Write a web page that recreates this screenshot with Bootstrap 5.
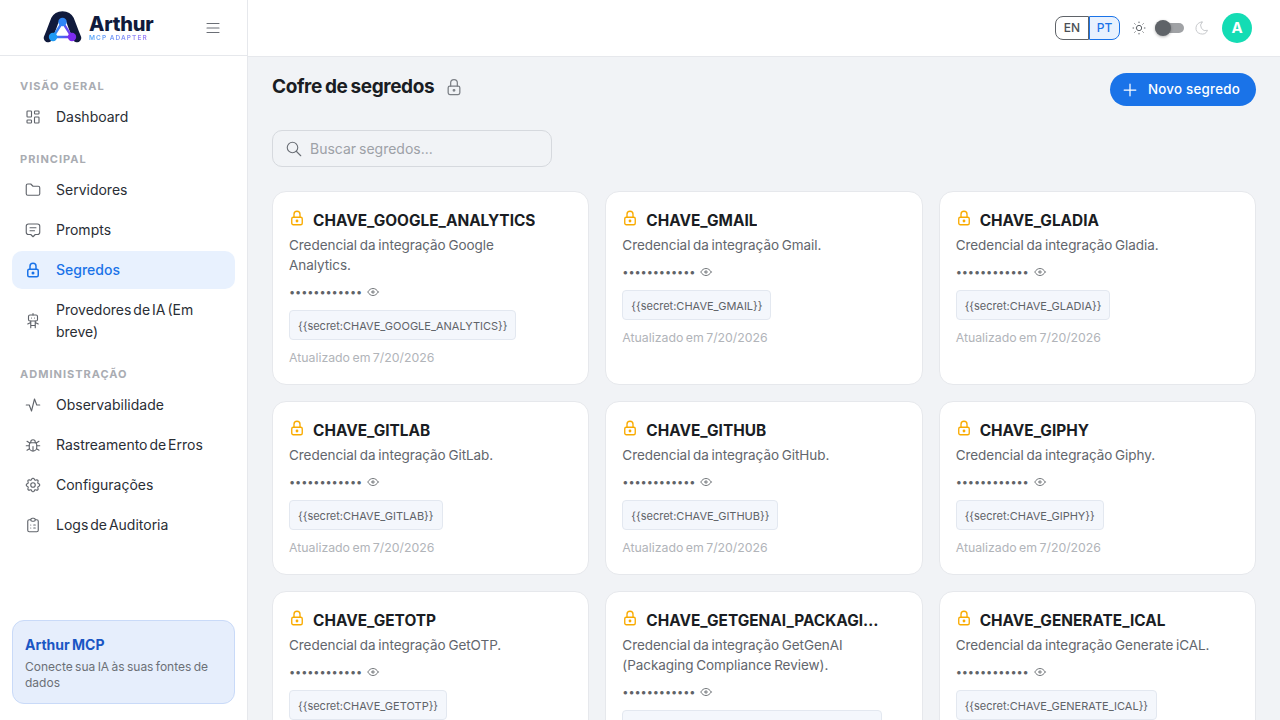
<!DOCTYPE html>
<html lang="pt">
<head>
  <meta charset="UTF-8" />
  <meta name="viewport" content="width=device-width, initial-scale=1.0"/>
  <title>Cofre de segredos | Arthur MCP</title>
  <link href="https://cdn.jsdelivr.net/npm/bootstrap@5.3.3/dist/css/bootstrap.min.css" rel="stylesheet" />
  <style>
    html, body { height: 100%; overflow: hidden; }
    body { font-family: "Inter", "Liberation Sans", sans-serif; background: #f1f3f6; color: #1f2329; word-spacing: -1px; }
    svg.ic { fill: none; stroke: currentColor; stroke-width: 1.5; stroke-linecap: round; stroke-linejoin: round; flex-shrink: 0; }
    svg.ic-b { stroke-width: 2; }

    .sidebar { width: 248px; flex-shrink: 0; background: #fff; border-right: 1px solid #e6e8ec; height: 720px; }
    .brand { height: 56px; border-bottom: 1px solid #e6e8ec; padding-left: 43px; padding-right: 25px; }
    .brand-name { font-size: 20px; font-weight: 800; line-height: 20px; color: #101a3c; letter-spacing: -.2px; }
    .brand-sub { width: fit-content; font-size: 6.500px; font-weight: 600; line-height: 8px; letter-spacing: 1.050px; word-spacing: 0; color: #7a8cf6; background: linear-gradient(90deg, #4fa6f8, #a07cf5); -webkit-background-clip: text; background-clip: text; -webkit-text-fill-color: transparent; }
    .menu-btn { color: #6b6f76; }
    .side-nav { padding: 22px 12px 0; }
    .nav-head { font-size: 11px; font-weight: 700; letter-spacing: 1px; word-spacing: 0; color: #a9acb2; padding: 0 8px; line-height: 16px; margin-bottom: 4px; }
    .side-link + .nav-head { margin-top: 15px; }
    .side-link { display: flex; align-items: center; gap: 14px; padding: 8px 12px; margin-bottom: 2px; min-height: 38px; border-radius: 10px; font-size: 14px; line-height: 22px; word-spacing: -2px; color: #2a2e35; text-decoration: none; }
    .side-link svg { color: #60646b; }
    .side-link.active { background: #e8f1fe; color: #1a73e8; font-weight: 500; }
    .side-link.active svg { color: #1a73e8; }
    .side-promo { background: #e6eefc; border: 1px solid #c9daf8; border-radius: 12px; padding: 14px 12px 12px; margin: 0 12px 16px; }
    .side-promo strong { display: block; font-size: 14px; line-height: 20px; color: #1a56c4; font-weight: 700; }
    .side-promo span { display: block; font-size: 12px; line-height: 16px; color: #6c7077; margin-top: 4px; }

    .main-col { min-width: 0; }
    .topbar { height: 57px; background: #fff; border-bottom: 1px solid #e6e8ec; padding-right: 28px; }
    .lang { margin-right: 11px; }
    .lang span { display: block; height: 24px; font-size: 12px; font-weight: 500; line-height: 22px; text-align: center; }
    .lang span:first-child { width: 34px; border: 1px solid #5f6368; border-radius: 8px 0 0 8px; color: #4b4f55; background: #fff; }
    .lang span:last-child { width: 31px; border: 1px solid #1a73e8; border-radius: 0 8px 8px 0; background: #e8f1fe; color: #1a73e8; }
    .toggle-track { width: 29px; height: 10px; margin: 0 10px 0 8px; background: #a0a2a5; border-radius: 5px; position: relative; }
    .toggle-thumb { position: absolute; left: 0; top: -3px; width: 16px; height: 16px; border-radius: 50%; background: #5f6368; box-shadow: 0 1px 3px rgba(0,0,0,.3); }
    .avatar { width: 30px; height: 30px; margin-left: 12px; border-radius: 50%; background: #14dcb4; color: #fff; font-size: 15px; font-weight: 700; line-height: 30px; text-align: center; }

    .page { padding: 16px 24px 0; }
    .page-head { gap: 10px; }
    .page-title { font-size: 19px; font-weight: 700; line-height: 28px; letter-spacing: -.4px; color: #1a1d23; margin: 0; }
    .btn-new { height: 33px; width: 146px; background: #1a73e8; color: #fff; border: 0; border-radius: 17px; font-size: 13.300px; font-weight: 500; letter-spacing: .25px; padding: 0 0 0 10px; gap: 8px; }
    .btn-new:hover { background: #1a73e8; color: #fff; }
    .search { width: 280px; height: 37px; border: 1px solid #d6d9de; border-radius: 10px; padding: 0 12px; margin: 24px 0; color: #6b6f76; gap: 7px; }
    .search input { border: 0; background: transparent; outline: 0; width: 100%; font-size: 14px; padding: 0; word-spacing: -1px; }
    .search input::placeholder { color: #9da1a7; opacity: 1; }

    .secret-grid { display: grid; grid-template-columns: repeat(3, minmax(0, 1fr)); gap: 16px; }
    .secret-card { background: #fff; border: 1px solid #e6e8ec; border-radius: 14px; padding: 17px 16px 16.750px; }
    .secret-top { gap: 7px; }
    .secret-lock { color: #f9ab00; margin: 0 0 0 -1px; }
    svg.secret-lock { stroke-width: 1.800; }
    .secret-name { font-size: 15.400px; font-weight: 700; line-height: 24px; color: #1a1d23; margin: 0 24px 0 0; overflow: hidden; white-space: nowrap; text-overflow: ellipsis; }
    .secret-desc { font-size: 13.500px; line-height: 20px; letter-spacing: -.05px; color: #62666d; margin: 2px 22px 0 0; }
    .secret-dots { font-size: 11px; line-height: 18px; letter-spacing: -.1px; word-spacing: 0; color: #5f6368; margin-top: 8px; height: 18px; }
    .secret-dots svg { color: #5f6368; margin-left: 4px; }
    .secret-ref { display: block; width: fit-content; max-width: 260px; overflow: hidden; text-overflow: ellipsis; font-family: "Inter", "Liberation Sans", sans-serif; font-size: 11px; line-height: 31px; height: 30px; padding: 0 8px; background: #f4f7fc; border: 1px solid #e3e8f0; border-radius: 4px; color: #5f6368; margin-top: 9px; white-space: nowrap; word-spacing: 0; }
    .secret-date { font-size: 12.300px; line-height: 18px; color: #b1b4b9; margin-top: 9px; }
  </style>
</head>
<body>

  <svg width="0" height="0" class="position-absolute">
    <symbol id="i-lock" viewBox="0 0 24 24"><path d="M5 13a2 2 0 0 1 2-2h10a2 2 0 0 1 2 2v6a2 2 0 0 1-2 2H7a2 2 0 0 1-2-2z"/><path d="M11 16a1 1 0 1 0 2 0a1 1 0 0 0-2 0"/><path d="M8 11V7a4 4 0 1 1 8 0v4"/></symbol>
    <symbol id="i-eye" viewBox="0 0 24 24"><path d="M10 12a2 2 0 1 0 4 0a2 2 0 0 0-4 0"/><path d="M21 12c-2.400 4-5.400 6-9 6s-6.600-2-9-6c2.400-4 5.400-6 9-6s6.600 2 9 6"/></symbol>
  </svg>

  <div class="d-flex">
    <!-- Sidebar -->
    <aside class="sidebar d-flex flex-column">
      <div class="brand d-flex align-items-center justify-content-between">
        <div class="d-flex align-items-center" style="gap:7px">
          <svg width="39" height="33" viewBox="0 0 39 33">
            <defs>
              <linearGradient id="tri" x1="0" y1="0" x2="1" y2="0"><stop offset="0" stop-color="#1e9bf5"/><stop offset="1" stop-color="#7c2cf0"/></linearGradient>
            </defs>
            <path d="M5 27C8 20 10 14 12 9c2-4 4.500-4.500 7.500-4.500S25 5 27 9c2 5 4 11 7 18" fill="none" stroke="#101a3c" stroke-width="8.500" stroke-linecap="round"/>
            <path d="M19.500 11 10 26h19z" fill="#fff" stroke="url(#tri)" stroke-width="2.400"/>
            <circle cx="19.500" cy="11" r="4.200" fill="#2f86f6"/>
            <circle cx="10" cy="26" r="4.200" fill="#1e9bf5"/>
            <circle cx="29" cy="26" r="4.200" fill="#7c2cf0"/>
          </svg>
          <div>
            <div class="brand-name">Arthur</div>
            <div class="brand-sub">MCP ADAPTER</div>
          </div>
        </div>
        <svg class="ic menu-btn" width="18" height="18" viewBox="0 0 24 24"><path d="M4 6h16M4 12h16M4 18h16"/></svg>
      </div>

      <nav class="side-nav flex-grow-1">
        <div class="nav-head">VISÃO GERAL</div>
        <a class="side-link" href="#">
          <svg class="ic" width="18" height="18" viewBox="0 0 24 24"><path d="M5 4h4a1 1 0 0 1 1 1v6a1 1 0 0 1-1 1H5a1 1 0 0 1-1-1V5a1 1 0 0 1 1-1"/><path d="M5 16h4a1 1 0 0 1 1 1v2a1 1 0 0 1-1 1H5a1 1 0 0 1-1-1v-2a1 1 0 0 1 1-1"/><path d="M15 12h4a1 1 0 0 1 1 1v6a1 1 0 0 1-1 1h-4a1 1 0 0 1-1-1v-6a1 1 0 0 1 1-1"/><path d="M15 4h4a1 1 0 0 1 1 1v2a1 1 0 0 1-1 1h-4a1 1 0 0 1-1-1V5a1 1 0 0 1 1-1"/></svg>
          Dashboard</a>

        <div class="nav-head">PRINCIPAL</div>
        <a class="side-link" href="#">
          <svg class="ic" width="18" height="18" viewBox="0 0 24 24"><path d="M5 4h4l3 3h7a2 2 0 0 1 2 2v8a2 2 0 0 1-2 2H5a2 2 0 0 1-2-2V6a2 2 0 0 1 2-2"/></svg>
          Servidores</a>
        <a class="side-link" href="#">
          <svg class="ic" width="18" height="18" viewBox="0 0 24 24"><path d="M8 9h8M8 13h6"/><path d="M9 18H6a3 3 0 0 1-3-3V7a3 3 0 0 1 3-3h12a3 3 0 0 1 3 3v8a3 3 0 0 1-3 3h-3l-3 3z"/></svg>
          Prompts</a>
        <a class="side-link active" href="#">
          <svg class="ic ic-b" width="18" height="18"><use href="#i-lock"/></svg>
          Segredos</a>
        <a class="side-link" href="#">
          <svg class="ic" width="18" height="18" viewBox="0 0 24 24"><path d="M6 6a2 2 0 0 1 2-2h8a2 2 0 0 1 2 2v4a2 2 0 0 1-2 2H8a2 2 0 0 1-2-2z"/><path d="M12 2v2M9 12v9M15 12v9M5 16l4-2M15 14l4 2M9 18h6M10 8v.01M14 8v.01"/></svg>
          Provedores de IA (Em breve)</a>

        <div class="nav-head">ADMINISTRAÇÃO</div>
        <a class="side-link" href="#">
          <svg class="ic" width="18" height="18" viewBox="0 0 24 24"><path d="M3 12h4l3 8 4-16 3 8h4"/></svg>
          Observabilidade</a>
        <a class="side-link" href="#">
          <svg class="ic" width="18" height="18" viewBox="0 0 24 24"><path d="M9 9V8a3 3 0 0 1 6 0v1"/><path d="M8 9h8a6 6 0 0 1 1 3v3a5 5 0 0 1-10 0v-3a6 6 0 0 1 1-3"/><path d="M3 13h4M17 13h4M12 20v-6M4 19l3.350-2M20 19l-3.350-2M4 7l3.750 2.400M20 7l-3.750 2.400"/></svg>
          Rastreamento de Erros</a>
        <a class="side-link" href="#">
          <svg class="ic" width="18" height="18" viewBox="0 0 24 24"><path d="M10.325 4.317c.426-1.756 2.924-1.756 3.350 0a1.724 1.724 0 0 0 2.573 1.066c1.543-.94 3.310.826 2.370 2.370a1.724 1.724 0 0 0 1.065 2.572c1.756.426 1.756 2.924 0 3.350a1.724 1.724 0 0 0-1.066 2.573c.94 1.543-.826 3.310-2.370 2.370a1.724 1.724 0 0 0-2.572 1.065c-.426 1.756-2.924 1.756-3.350 0a1.724 1.724 0 0 0-2.573-1.066c-1.543.94-3.310-.826-2.370-2.370a1.724 1.724 0 0 0-1.065-2.572c-1.756-.426-1.756-2.924 0-3.350a1.724 1.724 0 0 0 1.066-2.573c-.94-1.543.826-3.310 2.370-2.370c1 .608 2.296.07 2.572-1.065z"/><path d="M9 12a3 3 0 1 0 6 0a3 3 0 0 0-6 0"/></svg>
          Configurações</a>
        <a class="side-link" href="#">
          <svg class="ic" width="18" height="18" viewBox="0 0 24 24"><path d="M9 5H7a2 2 0 0 0-2 2v12a2 2 0 0 0 2 2h10a2 2 0 0 0 2-2V7a2 2 0 0 0-2-2h-2"/><path d="M9 5a2 2 0 0 1 2-2h2a2 2 0 0 1 2 2a2 2 0 0 1-2 2h-2a2 2 0 0 1-2-2z"/><path d="M9 12h.01M13 12h2M9 16h.01M13 16h2"/></svg>
          Logs de Auditoria</a>
      </nav>

      <div class="side-promo">
        <strong>Arthur MCP</strong>
        <span>Conecte sua IA às suas fontes de dados</span>
      </div>
    </aside>

    <!-- Main -->
    <div class="main-col flex-grow-1 overflow-hidden">
      <header class="topbar d-flex align-items-center justify-content-end">
        <div class="lang d-flex"><span>EN</span><span>PT</span></div>
        <div class="d-flex align-items-center">
          <svg class="ic" width="16" height="16" viewBox="0 0 24 24" style="color:#5f6368"><path d="M8 12a4 4 0 1 0 8 0a4 4 0 1 0-8 0"/><path d="M3 12h1m8-9v1m8 8h1m-9 8v1M5.600 5.600l.7.7m12.100-.7-.7.7m0 11.400.7.7m-12.100-.7-.7.7"/></svg>
          <div class="toggle-track"><div class="toggle-thumb"></div></div>
          <svg class="ic" width="16" height="16" viewBox="0 0 24 24" style="color:#c8cacd"><path d="M12 3h.393a7.500 7.500 0 0 0 7.920 12.446A9 9 0 1 1 12 2.992z"/></svg>
          <div class="avatar">A</div>
        </div>
      </header>

      <main class="page">
        <div class="d-flex justify-content-between align-items-start">
          <div class="page-head d-flex align-items-center">
            <h1 class="page-title">Cofre de segredos</h1>
            <svg class="ic" width="20" height="20" style="color:#7b7f85"><use href="#i-lock"/></svg>
          </div>
          <button class="btn btn-new d-flex align-items-center">
            <svg class="ic" width="20" height="20" viewBox="0 0 24 24"><path d="M12 5v14M5 12h14"/></svg>
            Novo segredo
          </button>
        </div>

        <div class="search d-flex align-items-center">
          <svg class="ic" width="18" height="18" viewBox="0 0 24 24"><path d="M3 10a7 7 0 1 0 14 0a7 7 0 1 0-14 0"/><path d="m21 21-6-6"/></svg>
          <input type="text" placeholder="Buscar segredos..." />
        </div>

        <div class="secret-grid">
          <div class="secret-card">
            <div class="secret-top d-flex"><svg class="ic secret-lock" width="18" height="18"><use href="#i-lock"/></svg><h2 class="secret-name">CHAVE_GOOGLE_ANALYTICS</h2></div>
            <p class="secret-desc">Credencial da integração Google Analytics.</p>
            <div class="secret-dots d-flex align-items-center">•••••••••••• <svg class="ic" width="14" height="14"><use href="#i-eye"/></svg></div>
            <code class="secret-ref">{{secret:CHAVE_GOOGLE_ANALYTICS}}</code>
            <div class="secret-date">Atualizado em 7/20/2026</div>
          </div>
          <div class="secret-card">
            <div class="secret-top d-flex"><svg class="ic secret-lock" width="18" height="18"><use href="#i-lock"/></svg><h2 class="secret-name">CHAVE_GMAIL</h2></div>
            <p class="secret-desc">Credencial da integração Gmail.</p>
            <div class="secret-dots d-flex align-items-center">•••••••••••• <svg class="ic" width="14" height="14"><use href="#i-eye"/></svg></div>
            <code class="secret-ref">{{secret:CHAVE_GMAIL}}</code>
            <div class="secret-date">Atualizado em 7/20/2026</div>
          </div>
          <div class="secret-card">
            <div class="secret-top d-flex"><svg class="ic secret-lock" width="18" height="18"><use href="#i-lock"/></svg><h2 class="secret-name">CHAVE_GLADIA</h2></div>
            <p class="secret-desc">Credencial da integração Gladia.</p>
            <div class="secret-dots d-flex align-items-center">•••••••••••• <svg class="ic" width="14" height="14"><use href="#i-eye"/></svg></div>
            <code class="secret-ref">{{secret:CHAVE_GLADIA}}</code>
            <div class="secret-date">Atualizado em 7/20/2026</div>
          </div>
          <div class="secret-card">
            <div class="secret-top d-flex"><svg class="ic secret-lock" width="18" height="18"><use href="#i-lock"/></svg><h2 class="secret-name">CHAVE_GITLAB</h2></div>
            <p class="secret-desc">Credencial da integração GitLab.</p>
            <div class="secret-dots d-flex align-items-center">•••••••••••• <svg class="ic" width="14" height="14"><use href="#i-eye"/></svg></div>
            <code class="secret-ref">{{secret:CHAVE_GITLAB}}</code>
            <div class="secret-date">Atualizado em 7/20/2026</div>
          </div>
          <div class="secret-card">
            <div class="secret-top d-flex"><svg class="ic secret-lock" width="18" height="18"><use href="#i-lock"/></svg><h2 class="secret-name">CHAVE_GITHUB</h2></div>
            <p class="secret-desc">Credencial da integração GitHub.</p>
            <div class="secret-dots d-flex align-items-center">•••••••••••• <svg class="ic" width="14" height="14"><use href="#i-eye"/></svg></div>
            <code class="secret-ref">{{secret:CHAVE_GITHUB}}</code>
            <div class="secret-date">Atualizado em 7/20/2026</div>
          </div>
          <div class="secret-card">
            <div class="secret-top d-flex"><svg class="ic secret-lock" width="18" height="18"><use href="#i-lock"/></svg><h2 class="secret-name">CHAVE_GIPHY</h2></div>
            <p class="secret-desc">Credencial da integração Giphy.</p>
            <div class="secret-dots d-flex align-items-center">•••••••••••• <svg class="ic" width="14" height="14"><use href="#i-eye"/></svg></div>
            <code class="secret-ref">{{secret:CHAVE_GIPHY}}</code>
            <div class="secret-date">Atualizado em 7/20/2026</div>
          </div>
          <div class="secret-card">
            <div class="secret-top d-flex"><svg class="ic secret-lock" width="18" height="18"><use href="#i-lock"/></svg><h2 class="secret-name">CHAVE_GETOTP</h2></div>
            <p class="secret-desc">Credencial da integração GetOTP.</p>
            <div class="secret-dots d-flex align-items-center">•••••••••••• <svg class="ic" width="14" height="14"><use href="#i-eye"/></svg></div>
            <code class="secret-ref">{{secret:CHAVE_GETOTP}}</code>
            <div class="secret-date">Atualizado em 7/20/2026</div>
          </div>
          <div class="secret-card">
            <div class="secret-top d-flex"><svg class="ic secret-lock" width="18" height="18"><use href="#i-lock"/></svg><h2 class="secret-name">CHAVE_GETGENAI_PACKAGING_COMPLIANCE_REVIEW</h2></div>
            <p class="secret-desc">Credencial da integração GetGenAI (Packaging Compliance Review).</p>
            <div class="secret-dots d-flex align-items-center">•••••••••••• <svg class="ic" width="14" height="14"><use href="#i-eye"/></svg></div>
            <code class="secret-ref">{{secret:CHAVE_GETGENAI_PACKAGING_COMPLIANCE_REVIEW}}</code>
            <div class="secret-date">Atualizado em 7/20/2026</div>
          </div>
          <div class="secret-card">
            <div class="secret-top d-flex"><svg class="ic secret-lock" width="18" height="18"><use href="#i-lock"/></svg><h2 class="secret-name">CHAVE_GENERATE_ICAL</h2></div>
            <p class="secret-desc">Credencial da integração Generate iCAL.</p>
            <div class="secret-dots d-flex align-items-center">•••••••••••• <svg class="ic" width="14" height="14"><use href="#i-eye"/></svg></div>
            <code class="secret-ref">{{secret:CHAVE_GENERATE_ICAL}}</code>
            <div class="secret-date">Atualizado em 7/20/2026</div>
          </div>
        </div>
      </main>
    </div>
  </div>

</body>
</html>
